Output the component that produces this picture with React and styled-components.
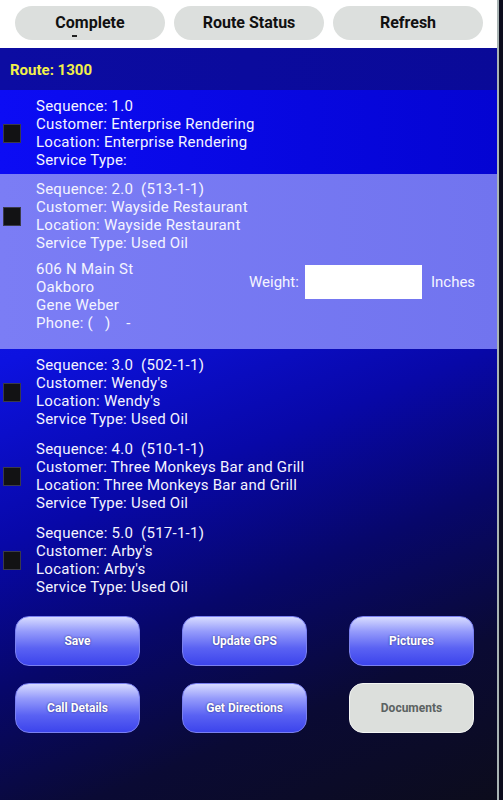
import React from 'react'
import styled, { createGlobalStyle } from 'styled-components'

const GlobalStyle = createGlobalStyle`
  html, body {
    margin: 0;
    padding: 0;
    background: #0c0c1c;
  }
  body {
    font-family: Roboto, "Noto Sans", "Liberation Sans", sans-serif;
  }
`

const Screen = styled.div`
  width: 499px;
  min-height: 800px;
  display: flex;
  flex-direction: column;
  border-right: 2px solid #a9b4b4;
  box-sizing: border-box;
`

const TopBar = styled.div`
  height: 48px;
  background: #ffffff;
  display: flex;
  align-items: flex-start;
  gap: 9px;
  padding: 6px 0 0 15px;
  box-sizing: border-box;
`

const TopButton = styled.div`
  position: relative;
  width: 150px;
  height: 34px;
  border-radius: 17px;
  background: #dcdfdd;
  color: #111;
  font-weight: 700;
  font-size: 16px;
  display: flex;
  align-items: center;
  justify-content: center;
  padding-bottom: 1px;
  box-sizing: border-box;
`

const ActiveMark = styled.span`
  position: absolute;
  left: 57px;
  bottom: 3px;
  width: 5px;
  height: 2px;
  background: #222;
`

const RouteHeader = styled.div`
  height: 42px;
  background: linear-gradient(90deg, #0c0ca2, #0a0a98);
  color: #f2f04a;
  font-weight: 700;
  font-size: 15px;
  display: flex;
  align-items: center;
  padding-left: 10px;
  padding-top: 2px;
  box-sizing: border-box;
`

const Body = styled.div`
  flex: 1;
  display: flex;
  flex-direction: column;
  background: linear-gradient(158deg, #1820f4 0%, #0d12e0 30%, #0808a8 50%, #07076a 66%, #0a0a34 82%, #0c0c1c 100%);
`

const Stop = styled.div`
  display: flex;
  flex-direction: column;
  padding: ${p => (p.$selected ? '6px 0 17px' : '7px 0 5px')};
  background: ${p =>
    p.$selected
      ? 'linear-gradient(90deg, #7b7df5, #7174ef)'
      : p.$highlight
        ? 'linear-gradient(90deg, #0c0cf4, #0404d2)'
        : 'transparent'};
`

const StopMain = styled.div`
  display: flex;
  align-items: center;
`

const Check = styled.div`
  width: 18px;
  height: 19px;
  margin-left: 3px;
  margin-right: 15px;
  background: #121214;
  border: 1px solid #3a3a4a;
  box-sizing: border-box;
`

const Lines = styled.div`
  display: flex;
  flex-direction: column;
  color: #f4f4ff;
  font-size: 15px;
  letter-spacing: 0.25px;
  line-height: 18px;
  white-space: pre;
`

const Extra = styled.div`
  display: flex;
  align-items: flex-start;
  padding: 8px 0 0 36px;
`

const Address = styled(Lines)`
  width: 213px;
`

const WeightGroup = styled.div`
  display: flex;
  align-items: center;
  margin-top: 5px;
  color: #f4f4ff;
  font-size: 15px;
`

const WeightInput = styled.div`
  width: 117px;
  height: 34px;
  background: #ffffff;
  margin: 0 9px 0 6px;
`

const ButtonGrid = styled.div`
  display: grid;
  grid-template-columns: repeat(3, 125px);
  column-gap: 42px;
  row-gap: 17px;
  padding: 15px 0 0 15px;
`

const ActionButton = styled.div`
  height: 50px;
  border-radius: 14px;
  display: flex;
  align-items: center;
  justify-content: center;
  font-weight: 700;
  font-size: 12px;
  box-sizing: border-box;
  background: ${p =>
    p.$disabled
      ? '#dcdfdc'
      : 'linear-gradient(180deg, #d8dcff 0%, #959bfb 30%, #5a62f3 65%, #3c44ec 100%)'};
  color: ${p => (p.$disabled ? '#5b6262' : '#ffffff')};
  border: 1px solid ${p => (p.$disabled ? '#f4f6f4' : '#7a80f0')};
  text-shadow: ${p => (p.$disabled ? 'none' : '0 0 2px rgba(20,20,90,0.8)')};
`

const stops = [
  { seq: '1.0', code: '', customer: 'Enterprise Rendering', location: 'Enterprise Rendering', service: '', highlight: true },
  { seq: '2.0', code: '(513-1-1)', customer: 'Wayside Restaurant', location: 'Wayside Restaurant', service: 'Used Oil', selected: true,
    address: ['606 N Main St', 'Oakboro', 'Gene Weber', 'Phone: (   )    -'] },
  { seq: '3.0', code: '(502-1-1)', customer: "Wendy's", location: "Wendy's", service: 'Used Oil' },
  { seq: '4.0', code: '(510-1-1)', customer: 'Three Monkeys Bar and Grill', location: 'Three Monkeys Bar and Grill', service: 'Used Oil' },
  { seq: '5.0', code: '(517-1-1)', customer: "Arby's", location: "Arby's", service: 'Used Oil' },
]

const actions = ['Save', 'Update GPS', 'Pictures', 'Call Details', 'Get Directions', 'Documents']

export default function App() {
  return (
    <>
      <GlobalStyle />
      <Screen>
        <TopBar>
          <TopButton>Complete<ActiveMark /></TopButton>
          <TopButton>Route Status</TopButton>
          <TopButton>Refresh</TopButton>
        </TopBar>
        <RouteHeader>Route: 1300</RouteHeader>
        <Body>
          {stops.map(s => (
            <Stop key={s.seq} $selected={s.selected} $highlight={s.highlight}>
              <StopMain>
                <Check />
                <Lines>
                  <span>Sequence: {s.seq}{s.code ? '  ' + s.code : ''}</span>
                  <span>Customer: {s.customer}</span>
                  <span>Location: {s.location}</span>
                  <span>Service Type: {s.service}</span>
                </Lines>
              </StopMain>
              {s.address && (
                <Extra>
                  <Address>
                    {s.address.map(a => (
                      <span key={a}>{a}</span>
                    ))}
                  </Address>
                  <WeightGroup>
                    Weight:
                    <WeightInput />
                    Inches
                  </WeightGroup>
                </Extra>
              )}
            </Stop>
          ))}
          <ButtonGrid>
            {actions.map(a => (
              <ActionButton key={a} $disabled={a === 'Documents'}>{a}</ActionButton>
            ))}
          </ButtonGrid>
        </Body>
      </Screen>
    </>
  )
}
